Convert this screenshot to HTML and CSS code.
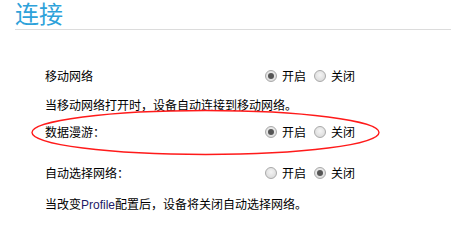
FILE: index.html
```html
<!DOCTYPE html>
<html lang="zh-CN">
<head>
<meta charset="utf-8">
<title>连接</title>
<link rel="stylesheet" href="styles.css">
</head>
<body>
<div class="page">
  <h1 class="title">连接</h1>
  <div class="content">
    <div class="row row-first">
      <span class="label">移动网络</span>
      <span class="choices">
        <span class="radio checked"></span><span class="opt">开启</span>
        <span class="radio"></span><span class="opt">关闭</span>
      </span>
    </div>
    <p class="desc desc-first">当移动网络打开时，设备自动连接到移动网络。</p>
    <div class="row row-roam">
      <span class="label">数据漫游：</span>
      <span class="choices">
        <span class="radio checked"></span><span class="opt">开启</span>
        <span class="radio"></span><span class="opt">关闭</span>
      </span>
    </div>
    <div class="row row-auto">
      <span class="label">自动选择网络：</span>
      <span class="choices">
        <span class="radio"></span><span class="opt">开启</span>
        <span class="radio checked"></span><span class="opt">关闭</span>
      </span>
    </div>
    <p class="desc desc-last">当改变<span class="latin">Profile</span>配置后，设备将关闭自动选择网络。</p>
  </div>
  <svg class="annotation" width="451" height="248" viewBox="0 0 451 248" aria-hidden="true">
    <ellipse cx="205.5" cy="132.5" rx="173.5" ry="22" fill="none" stroke="#ff1a1a" stroke-width="1.4"/>
  </svg>
</div>
</body>
</html>
```

FILE: styles.css
```css
html, body {
  margin: 0;
  padding: 0;
  background: #ffffff;
  overflow: hidden;
}

.page {
  position: relative;
  width: 451px;
  height: 248px;
  font-family: "Noto Sans CJK SC", "Liberation Sans", sans-serif;
  font-size: 12px;
  color: #000;
}

.title {
  margin: 0 0 0 15px;
  height: 29px;
  border-bottom: 1px solid #dcdcdc;
  font-size: 24px;
  line-height: 26px;
  font-weight: normal;
  color: #2ea2da;
  box-sizing: content-box;
}

.content {
  padding-left: 45px;
}

.row {
  display: flex;
  align-items: center;
  height: 16px;
  line-height: 16px;
}

.label {
  width: 220px;
}

.choices {
  display: flex;
  align-items: center;
}

.radio {
  width: 10px;
  height: 10px;
  border-radius: 50%;
  border: 1px solid #a9a9a9;
  background: radial-gradient(circle at 50% 40%, #f4f4f4 0%, #dedede 70%, #cfcfcf 100%);
  position: relative;
  flex: none;
}

.radio.checked::after {
  content: "";
  position: absolute;
  left: 2px;
  top: 2px;
  width: 6px;
  height: 6px;
  border-radius: 50%;
  background: #555;
}

.opt {
  margin-left: 5px;
  margin-right: 8px;
}

.desc {
  margin: 0;
  height: 16px;
  line-height: 16px;
}

.row-first { margin-top: 38px; }
.desc-first { margin-top: 13px; }
.row-roam { margin-top: 11px; }
.row-auto { margin-top: 25px; }
.desc-last { margin-top: 15px; }

.latin {
  font-family: "Liberation Sans", sans-serif;
  color: #1e1a66;
}

.annotation {
  position: absolute;
  left: 0;
  top: 0;
  pointer-events: none;
}
```
